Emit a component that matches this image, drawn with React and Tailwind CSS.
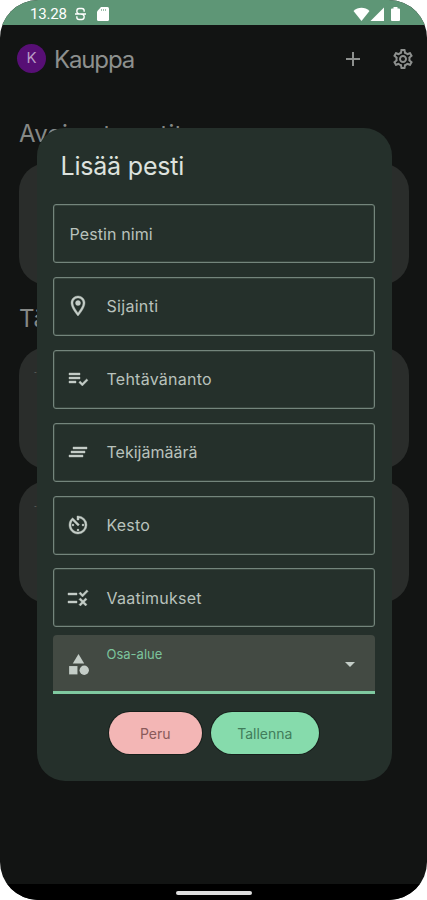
import {
  MdAdd,
  MdArrowDropDown,
  MdAvTimer,
  MdCategory,
  MdClearAll,
  MdOutlineLocationOn,
  MdOutlineSettings,
  MdPlaylistAddCheck,
  MdRule,
} from 'react-icons/md';

const FIELDS = [
  { label: 'Pestin nimi', spacing: 'tracking-[0.1px]' },
  { label: 'Sijainti', icon: MdOutlineLocationOn, spacing: 'tracking-[0.3px]' },
  { label: 'Tehtävänanto', icon: MdPlaylistAddCheck, spacing: 'tracking-[0.25px]' },
  { label: 'Tekijämäärä', icon: MdClearAll, spacing: 'tracking-normal' },
  { label: 'Kesto', icon: MdAvTimer, spacing: 'tracking-[0.2px]' },
  { label: 'Vaatimukset', icon: MdRule, spacing: 'tracking-[0.25px]' },
];

function StatusBar() {
  return (
    <div className="flex h-[25px] items-center bg-[#5e9676] pt-[3px] pr-[26px] pl-[30px] text-white">
      <span className="w-[45px] font-[Roboto] text-[15px] leading-none tracking-[-0.2px]">13.28</span>
      <svg viewBox="0 0 12 14" className="h-[14px] w-[11px]" fill="none" stroke="currentColor" strokeWidth="1.5">
        <path d="M10 4.500V3.500Q10 1 7.500 1h-3Q2 1 2 4 2 7 6 7t4 3q0 3-2.500 3h-3Q2 13 2 10.500V9.500M0 7h12" />
      </svg>
      <svg viewBox="0 0 12 14" className="ml-[11px] h-[14px] w-[12px]" fill="currentColor">
        <path d="M4 0h6.500Q12 0 12 1.500v11Q12 14 10.500 14h-9Q0 14 0 12.500V4.500Z" />
        <path d="M4.500 2v2M6.500 2v2M8.500 2v2" stroke="#5e9676" strokeWidth=".6" />
      </svg>
      <div className="flex-1" />
      <svg viewBox="0 0 48 15" className="h-[15px] w-[48px]" fill="currentColor">
        <path d="M.5 4C5-.3 12-.3 16.500 4L8.500 14Z" />
        <path d="M31 .5V14H17.500Z" />
        <path d="M40.500 0h4v1.500H46q1 0 1 1V13q0 1-1 1h-7q-1 0-1-1V2.500q0-1 1-1h1.500Z" />
      </svg>
    </div>
  );
}

function Header() {
  return (
    <header className="flex h-[67px] items-center pr-3 pl-[17px] text-[#8d908e]">
      <div className="flex size-[29px] items-center justify-center rounded-full bg-[#570f75] text-[15px] text-[#b99ac5]">
        K
      </div>
      <h1 className="mt-[3px] ml-2 text-[24px] leading-none tracking-[-1.15px]">Kauppa</h1>
      <div className="flex-1" />
      <MdAdd className="size-[24px]" />
      <MdOutlineSettings className="ml-[26px] size-[24px]" />
    </header>
  );
}

function PostCard({ title }) {
  return (
    <div className="h-[122px] rounded-[28px] bg-[#2a2d2b] pt-[22px] pl-[15px] text-[6px] leading-none text-[#7a7d7b]">
      {title}
    </div>
  );
}

function Field({ label, icon: Icon, spacing }) {
  return (
    <div className="flex h-[59px] items-center rounded-[3px] border-[1.5px] border-[#74857c] px-[13px] text-[16px] text-[#b9c2bc] ring-[0.5px] ring-[#4a5951] ring-inset">
      {Icon ? (
        // the icons carry an empty bounding path, which must stay unstroked
        <Icon className="mr-[17px] -ml-px size-[24px] shrink-0 stroke-[#c4cdc7] stroke-[0.4] text-[#c4cdc7] [&_[fill=none]]:stroke-none" />
      ) : (
        <span className="w-[3px]" />
      )}
      <span className={spacing}>{label}</span>
    </div>
  );
}

function AddPostDialog() {
  return (
    <div className="absolute top-[128px] left-[36.5px] h-[652.5px] w-[355px] rounded-[28px] bg-[#25302b] pr-[16.5px] pl-4 pt-[22px]">
      <h2 className="pl-[8px] text-[25px] leading-[32px] tracking-[-0.2px] text-[#dde2de]">Lisää pesti</h2>
      <div className="mt-[22px] flex flex-col gap-[13.9px]">
        {FIELDS.map((f) => (
          <Field key={f.label} {...f} />
        ))}
      </div>
      <div className="mt-[7.5px] flex h-[59px] items-center rounded-t-[4px] border-b-[3px] border-[#7fc9a0] bg-[#434a43] px-[13px]">
        <MdCategory className="mt-[3px] size-[25px] text-[#c4cdc7]" />
        <span className="mb-[17px] ml-4 text-[13px] leading-none text-[#7cc49d]">Osa-alue</span>
        <MdArrowDropDown className="mt-[2px] ml-auto size-[24px] text-[#c4cdc7]" />
      </div>
      <div className="mt-[18.5px] flex justify-center gap-[9px] text-[14px]">
        <button className="h-[42px] w-[93px] rounded-full bg-[#f3b6b5] text-[#8a5a5a] ring-1 ring-[#171f1b]">Peru</button>
        <button className="h-[42px] w-[108px] rounded-full bg-[#86dbac] text-[#417d5b] ring-1 ring-[#171f1b]">
          Tallenna
        </button>
      </div>
    </div>
  );
}

export default function App() {
  return (
    <div className="h-[900px] w-[427px] bg-white font-[Inter,sans-serif]">
      <div className="relative flex h-full flex-col overflow-hidden rounded-[38px] bg-[#121413]">
        <StatusBar />
        <Header />
        <main className="flex-1 pt-[27px] pr-[18px] pl-[19px]">
          <h2 className="text-[24px] leading-[30px] tracking-[0.2px] text-[#858886]">Avoimet pestit</h2>
          <div className="mt-[14px]">
            <PostCard />
          </div>
          <h2 className="mt-[18px] text-[24px] leading-[32px] text-[#858886]">Tä</h2>
          <div className="mt-[12px] flex flex-col gap-[12px]">
            <PostCard title="-" />
            <PostCard title="-" />
          </div>
        </main>
        <div className="flex h-[16px] items-center justify-center bg-black">
          <div className="mt-[2px] h-[4px] w-[76px] rounded-full bg-[#dedede]" />
        </div>
        <AddPostDialog />
      </div>
    </div>
  );
}
